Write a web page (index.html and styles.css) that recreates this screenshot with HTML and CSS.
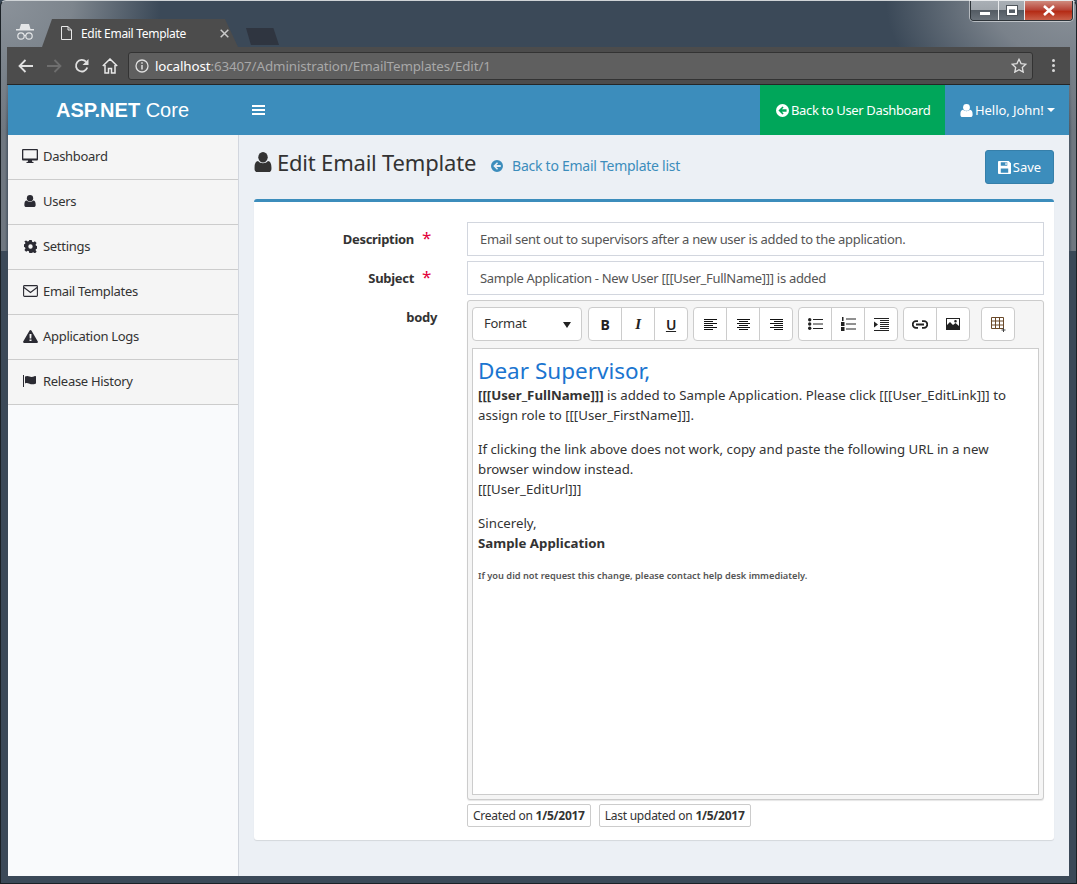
FILE: index.html
```html
<!DOCTYPE html>
<html lang="en">
<head>
<meta charset="utf-8">
<title>Edit Email Template</title>
<link rel="stylesheet" href="styles.css">
</head>
<body>
<svg class="defs" width="0" height="0" aria-hidden="true">
  <defs>
    <symbol id="i-user" viewBox="0 0 16 16"><circle cx="8" cy="4.2" r="4.2"/><path d="M3.6 7.2c1.1 1.1 2.7 1.8 4.4 1.8s3.300-.7 4.400-1.800c2 .3 3.100 2 3.100 5v1.300c0 1.500-1 2.500-2.500 2.500H3c-1.500 0-2.500-1-2.500-2.500v-1.300c0-3 1.100-4.700 3.100-5z"/></symbol>
    <symbol id="i-back" viewBox="0 0 16 16"><path fill-rule="evenodd" d="M8 0a8 8 0 1 0 0 16A8 8 0 0 0 8 0zM3 8l5-5 1.400 1.400-2.200 2.200H13v2.800H7.200l2.200 2.200L8 13z"/></symbol>
  </defs>
</svg>
<div class="window">
  <div class="winbtns">
    <span class="winbtn min"><i></i></span>
    <span class="winbtn max"><i></i></span>
    <span class="winbtn close">
      <svg width="14" height="11" viewBox="0 0 14 11"><path d="M2 1l10 9M12 1L2 10" stroke="#fff" stroke-width="2.600" fill="none"/></svg>
    </span>
  </div>
  <div class="tabstrip">
    <svg class="incognito" width="18" height="17" viewBox="0 0 18 17"><path fill="#e4e6e8" d="M5 0h8l1.500 5H18v1.500H0V5h3.500z"/><g fill="none" stroke="#e4e6e8" stroke-width="1.200"><circle cx="5" cy="12" r="3.200"/><circle cx="13" cy="12" r="3.200"/><path d="M8 11.500h2"/></g></svg>
    <div class="tab">
      <svg class="tabdoc" width="11" height="14" viewBox="0 0 11 14"><path d="M.5.500h6.500l3.500 3.500v9.500H.5zM7 .5V4h3.500" fill="none" stroke="#e8e8e8"/></svg>
      <span class="tabtitle">Edit Email Template</span>
      <svg class="tabx" width="9" height="9" viewBox="0 0 9 9"><path d="M.7.700l7.600 7.600M8.300.700L.7 8.300" stroke="#c9c9c9" stroke-width="1.500"/></svg>
    </div>
    <div class="newtab"></div>
  </div>
  <div class="toolbar">
    <svg class="tb-ic" width="16" height="14" viewBox="0 0 16 14"><path d="M15 7H2M7.500 1L1.500 7l6 6" fill="none" stroke="#e0e0e0" stroke-width="1.800"/></svg>
    <svg class="tb-ic" width="16" height="14" viewBox="0 0 16 14"><path d="M1 7h13M8.500 1l6 6-6 6" fill="none" stroke="#6e6e6e" stroke-width="1.800"/></svg>
    <svg class="tb-ic" width="16" height="16" viewBox="0 0 16 16"><path d="M13.300 9.500A5.800 5.800 0 1 1 12 3.700" fill="none" stroke="#e0e0e0" stroke-width="1.800"/><path d="M14.500 1v6h-6z" fill="#e0e0e0"/></svg>
    <svg class="tb-ic" width="16" height="16" viewBox="0 0 16 16"><path d="M.8 8L8 1l7.200 7M3 7v8h3.500v-4.500h3V15H13V7" fill="none" stroke="#e8e8e8" stroke-width="1.500"/></svg>
    <div class="omnibox">
      <svg width="14" height="14" viewBox="0 0 14 14"><circle cx="7" cy="7" r="6" fill="none" stroke="#e0e0e0" stroke-width="1.300"/><path d="M7 6v4.500M7 3.200v1.600" stroke="#e0e0e0" stroke-width="1.500"/></svg>
      <span class="url"><b>localhost</b>:63407/Administration/EmailTemplates/Edit/1</span>
      <svg class="star" width="16" height="15" viewBox="0 0 16 15"><path d="M8 1.300l2.050 4.300 4.700.6-3.450 3.250.9 4.650L8 11.800l-4.200 2.300.9-4.650L1.250 6.200l4.700-.6z" fill="none" stroke="#e0e0e0" stroke-width="1.300"/></svg>
    </div>
    <div class="kebab"><i></i><i></i><i></i></div>
  </div>
  <div class="app">
    <header class="topbar">
      <a class="logo"><b>ASP.NET</b> Core</a>
      <span class="burger"><i></i><i></i><i></i></span>
      <a class="nav-green"><svg class="ic13" fill="currentColor"><use href="#i-back"/></svg>Back to User Dashboard</a>
      <a class="nav-user"><svg class="ic13" fill="currentColor"><use href="#i-user"/></svg>Hello, John!<span class="caret"></span></a>
    </header>
    <div class="main">
      <nav class="sidebar">
        <a class="side-item"><span class="side-ic"><svg width="16" height="14" viewBox="0 0 16 14" fill="currentColor"><path fill-rule="evenodd" d="M1.300 0h13.400C15.500 0 16 .5 16 1.300v8.900c0 .8-.5 1.300-1.300 1.300H10v1.200l1.500.3v1H4.500v-1l1.500-.3v-1.200H1.300C.5 11.500 0 11 0 10.200V1.300C0 .5.500 0 1.300 0zM1.300 1.200v8.400h13.400V1.200z"/></svg></span>Dashboard</a>
        <a class="side-item"><span class="side-ic"><svg width="12" height="12" fill="currentColor"><use href="#i-user"/></svg></span>Users</a>
        <a class="side-item"><span class="side-ic"><svg width="13" height="13" viewBox="0 0 16 16" fill="currentColor"><path fill-rule="evenodd" d="M6.500 0h3l.5 2.300 1.400.6 2-1.300 2.100 2.100-1.300 2 .6 1.400 2.200.4v3l-2.200.5-.6 1.400 1.300 2-2.100 2.100-2-1.300-1.400.6L9.500 16h-3L6 13.800l-1.400-.6-2 1.300L.5 12.400l1.300-2-.6-1.400L-1 8.500v-3l2.200-.5.600-1.400-1.300-2L2.600 .5l2 1.300L6 1.200zM8 5.300a2.700 2.700 0 1 0 0 5.400 2.700 2.700 0 0 0 0-5.400z"/></svg></span>Settings</a>
        <a class="side-item"><span class="side-ic"><svg width="15" height="12" viewBox="0 0 15 12"><path d="M1.500.6h12c.5 0 .9.400.9.900v9c0 .5-.4.900-.9.900h-12c-.5 0-.9-.4-.9-.9v-9c0-.5.400-.9.900-.9zM1 2.500l6.500 5 6.500-5" fill="none" stroke="currentColor" stroke-width="1.100"/></svg></span>Email Templates</a>
        <a class="side-item"><span class="side-ic"><svg width="15" height="13" viewBox="0 0 15 13" fill="currentColor"><path fill-rule="evenodd" d="M7.500 0c.4 0 .7.200.9.500l6.400 11c.4.700 0 1.500-.9 1.500H1.100c-.9 0-1.300-.8-.9-1.500L6.600.5c.2-.3.5-.5.900-.5zM6.500 4l.2 4.500h1.600L8.500 4zM6.500 9.500V11h2V9.500z"/></svg></span>Application Logs</a>
        <a class="side-item"><span class="side-ic"><svg width="14" height="12" viewBox="0 0 14 12" fill="currentColor"><path d="M0 0h1v12H0z"/><path d="M2 1.500c1.500-.8 3-.8 4.500 0s3 .6 5.500-.5l1 .200v7.300c-2.500 1-4.500 1.200-6.500.3S3.500 7.700 2 8.500z"/></svg></span>Release History</a>
      </nav>
      <main class="content">
        <div class="page-head">
          <h1 class="page-title"><svg width="18" height="20" viewBox="0 0 16 16" preserveAspectRatio="none" fill="currentColor"><use href="#i-user"/></svg>Edit Email Template</h1>
          <a class="back-link"><svg width="12" height="12" fill="currentColor"><use href="#i-back"/></svg>Back to Email Template list</a>
          <button class="btn-save"><svg width="13" height="13" viewBox="0 0 14 14"><path fill="#fff" fill-rule="evenodd" d="M1 0h10.500L14 2.500V13a1 1 0 0 1-1 1H1a1 1 0 0 1-1-1V1a1 1 0 0 1 1-1zM3 1.300V5h7V1.300zM8 1.800h1.300v2.600H8zM3 8v4.700h8V8z"/></svg>Save</button>
        </div>
        <section class="card">
          <div class="form-row">
            <label class="form-label">Description<span class="req">*</span></label>
            <div class="input">Email sent out to supervisors after a new user is added to the application.</div>
          </div>
          <div class="form-row">
            <label class="form-label">Subject<span class="req">*</span></label>
            <div class="input">Sample Application - New User [[[User_FullName]]] is added</div>
          </div>
          <div class="form-row">
            <label class="form-label body-label">body</label>
            <div class="body-col">
              <div class="editor">
                <div class="ed-toolbar">
                  <div class="ed-group ed-first"><span class="ed-format">Format<span class="ed-caret"></span></span></div>
                  <div class="ed-group">
                    <span class="ed-btn ed-b">B</span><span class="ed-btn ed-i">I</span><span class="ed-btn ed-u">U</span>
                  </div>
                  <div class="ed-group">
                    <span class="ed-btn"><svg width="13" height="11" viewBox="0 0 13 11"><path d="M0 .5h13M0 2.500h9M0 4.500h13M0 6.500h9M0 8.500h13M0 10.500h9" stroke="#111"/></svg></span>
                    <span class="ed-btn"><svg width="13" height="11" viewBox="0 0 13 11"><path d="M0 .5h13M2 2.500h9M0 4.500h13M2 6.500h9M0 8.500h13M2 10.500h9" stroke="#111"/></svg></span>
                    <span class="ed-btn"><svg width="13" height="11" viewBox="0 0 13 11"><path d="M0 .5h13M4 2.500h9M0 4.500h13M4 6.500h9M0 8.500h13M4 10.500h9" stroke="#111"/></svg></span>
                  </div>
                  <div class="ed-group">
                    <span class="ed-btn"><svg width="15" height="12" viewBox="0 0 15 12"><g fill="#222"><circle cx="1.700" cy="1.700" r="1.700"/><circle cx="1.700" cy="6" r="1.700"/><circle cx="1.700" cy="10.300" r="1.700"/></g><path d="M5 1.500h10M5 6h10M5 10.500h10" stroke="#222"/></svg></span>
                    <span class="ed-btn"><svg width="15" height="14" viewBox="0 0 15 14"><path d="M5 2h10M5 7h10M5 12h10" stroke="#222"/><g fill="#222"><rect x="1" y="0" width="1.500" height="4"/><rect x="0" y="5" width="3.500" height="4"/><rect x="0" y="10" width="3.500" height="4"/></g></svg></span>
                    <span class="ed-btn"><svg width="15" height="13" viewBox="0 0 15 13"><path d="M0 .5h15M6 2.500h9M6 4.500h9M6 6.500h9M6 8.500h9M6 10.500h9M0 12.500h15" stroke="#222"/><path d="M0 3.500l4 3-4 3z" fill="#222"/></svg></span>
                  </div>
                  <div class="ed-group">
                    <span class="ed-btn"><svg width="16" height="9" viewBox="0 0 16 9"><path d="M6 1.200H4a3.300 3.300 0 0 0 0 6.600h2M10 1.200h2a3.300 3.300 0 0 1 0 6.600h-2M4 4.500h8" fill="none" stroke="#222" stroke-width="1.800"/></svg></span>
                    <span class="ed-btn"><svg width="14" height="12" viewBox="0 0 14 12"><path fill-rule="evenodd" fill="#222" d="M0 0h14v12H0zM1 1v6l3-3 3 3 2.500-2L13 8V1zM9.500 2a1.300 1.300 0 1 1 0 2.600 1.300 1.300 0 0 1 0-2.600z"/></svg></span>
                  </div>
                  <div class="ed-group ed-table">
                    <span class="ed-btn"><svg width="15" height="15" viewBox="0 0 15 15"><path d="M.5.500h12v11H.5zM.5 4h12M.5 8h12M4.500.5v11M8.500.5v11" fill="none" stroke="#6b4a2a"/><path d="M12.500 11v4M10.500 13h4" stroke="#444"/></svg></span>
                  </div>
                </div>
                <div class="ed-body">
                  <h2 class="mail-head">Dear Supervisor,</h2>
                  <p><b>[[[User_FullName]]]</b> is added to Sample Application. Please click [[[User_EditLink]]] to assign role to [[[User_FirstName]]].</p>
                  <p>If clicking the link above does not work, copy and paste the following URL in a new browser window instead.<br>[[[User_EditUrl]]]</p>
                  <p>Sincerely,<br><b>Sample Application</b></p>
                  <p class="mail-small">If you did not request this change, please contact help desk immediately.</p>
                </div>
              </div>
              <div class="badges">
                <span class="badge">Created on <b>1/5/2017</b></span>
                <span class="badge">Last updated on <b>1/5/2017</b></span>
              </div>
            </div>
          </div>
        </section>
      </main>
    </div>
  </div>
</div>
</body>
</html>
```

FILE: styles.css
```css
* { box-sizing: border-box; }
html, body { margin: 0; height: 100%; overflow: hidden; }
body { font-family: "Noto Sans", "Open Sans", sans-serif; font-size: 13px; letter-spacing: -.3px; color: #333; background: #3a4856; }
.defs { position: absolute; }
a { color: inherit; text-decoration: none; }

.window {
  position: relative;
  width: 1077px; height: 884px;
  padding: 0 7px 7px;
  display: flex; flex-direction: column;
  border: 1px solid #1b2126;
  border-top-color: #cfd3d6;
  border-radius: 6px 6px 0 0;
  background:
    radial-gradient(ellipse 160px 130px at 0 0, #8b929a 0%, #7d858d 45%, rgba(60,72,86,0) 100%),
    radial-gradient(ellipse 190px 130px at 100% 0, #8b929a 0%, #79818a 45%, rgba(60,72,86,0) 100%),
    linear-gradient(90deg, #6f7780 0, #6f7780 4px, transparent 8px) 0 0 / 100% 250px no-repeat,
    linear-gradient(270deg, #6f7780 0, #6f7780 4px, transparent 8px) 0 0 / 100% 250px no-repeat,
    #3b4958;
}

.winbtns {
  position: absolute; top: 0; right: 3px;
  display: flex; height: 20px;
  border: 1px solid #2d3338; border-top: 0;
  border-radius: 0 0 4px 4px; overflow: hidden;
  box-shadow: 0 0 0 1px rgba(255,255,255,.5);
}
.winbtn { display: flex; align-items: center; justify-content: center; height: 100%; border-right: 1px solid #e8eaec; background: linear-gradient(#a9afb5, #a0a6ac 45%, #545c64 50%, #6a727a); }
.min { width: 28px; }
.max { width: 26px; }
.close { width: 47px; border-right: 0; background: linear-gradient(#cf8a7e, #b8463a 45%, #b52c16 55%, #c9604a); }
.min i { width: 10px; height: 3px; margin-top: 5px; background: #fff; }
.max i { width: 10px; height: 9px; border: 2px solid #fff; border-top-width: 3px; outline: 1px solid #50565c; }

.tabstrip { height: 46px; display: flex; align-items: flex-end; flex-shrink: 0; }
.incognito { margin: 0 0 6px 8px; }
.tab {
  width: 196px; height: 28px; margin-left: 8px;
  display: flex; align-items: center;
  padding: 0 12px 0 19px;
  background: #4c4c4c;
  clip-path: polygon(0 100%, 10px 0, 183px 0, 100% 100%);
  color: #fff; font-size: 12px;
}
.tabtitle { margin-left: 9px; flex: 1; letter-spacing: -.3px; white-space: nowrap; }
.tabx { margin-right: -3px; }
.newtab { width: 33px; height: 17px; margin: 0 0 2px 8px; background: #2f3540; clip-path: polygon(0 0, 83% 0, 100% 100%, 15% 100%); }

.toolbar {
  height: 38px; flex-shrink: 0;
  margin: 0 -1px;
  padding: 0 6px 0 11px;
  display: flex; align-items: center;
  background: #4c4c4c;
  border-bottom: 1px solid #262626;
  gap: 12px;
}
.tb-ic { flex-shrink: 0; }
.omnibox {
  flex: 1; height: 28px; margin-left: -2px;
  display: flex; align-items: center; gap: 6px;
  padding: 0 5px 0 6px;
  background: #5f5f5f;
  border: 1px solid #333;
  border-radius: 3px;
}
.url { flex: 1; font-size: 13.350px; color: #a8a8a8; letter-spacing: -.1px; white-space: nowrap; }
.url b { color: #fff; font-weight: 400; }
.kebab { width: 22px; margin-left: -3px; display: flex; flex-direction: column; align-items: center; gap: 2px; }
.kebab i { width: 3px; height: 3px; border-radius: 50%; background: #d8d8d8; }

.app { flex: 1; min-height: 0; display: flex; flex-direction: column; background: #ecf0f5; }
.topbar { height: 50px; flex-shrink: 0; display: flex; align-items: center; background: #3c8dbc; color: #fff; }
.logo { width: 230px; padding-left: 48px; font: 20px "Liberation Sans", sans-serif; letter-spacing: 0; }
.burger { width: 13px; margin-left: 14px; display: flex; flex-direction: column; gap: 2px; margin-right: auto; }
.burger i { height: 2px; background: #fff; }
.nav-green, .nav-user { height: 100%; display: flex; align-items: center; font-size: 13px; }
.nav-green { width: 185px; padding-left: 16px; background: #00a65a; letter-spacing: -.36px; }
.nav-user { width: 124px; padding-left: 15px; letter-spacing: -.05px; }
.ic13 { width: 13px; height: 13px; margin-right: 2px; flex-shrink: 0; }
.caret { margin-left: 3px; border: 4.500px solid transparent; border-top-color: #fff; border-bottom: 0; }

.main { flex: 1; min-height: 0; display: flex; }
.sidebar { width: 231px; flex-shrink: 0; background: #f9fafc; border-right: 1px solid #d2d6de; }
.side-item { height: 45px; display: flex; align-items: center; padding: 0 0 2px 14px; background: #f5f5f5; border-bottom: 1px solid #ccc; color: #333; }
.side-ic { width: 21px; display: flex; justify-content: center; padding-right: 5px; color: #2b2b33; }

.content { flex: 1; min-width: 0; padding: 0 15px; }
.page-head { height: 64px; display: flex; align-items: flex-start; }
.page-title { margin: 14px 0 0; display: flex; align-items: center; gap: 5px; font-size: 22px; font-weight: 400; line-height: 26px; letter-spacing: -.2px; color: #333; }
.back-link { margin: 21px auto 0 15px; display: flex; align-items: center; gap: 9px; font-size: 14px; line-height: 20px; letter-spacing: -.26px; color: #3c8dbc; }
.btn-save { margin-top: 15px; width: 69px; height: 34px; display: flex; align-items: center; justify-content: center; gap: 2px; padding: 0; background: #3c8dbc; color: #fff; border: 1px solid #367fa9; border-radius: 3px; font: inherit; }

.card { height: 641px; padding: 20px 10px 0 0; background: #fff; border-top: 3px solid #3c8dbc; border-radius: 3px; box-shadow: 0 1px 1px rgba(0,0,0,.1); }
.form-row { display: grid; grid-template-columns: 213px 1fr; margin-bottom: 5px; }
.form-label { padding: 8px 53px 0 0; text-align: right; font-weight: 700; position: relative; line-height: 18px; }
.body-label { padding-right: 30px; }
.req { position: absolute; right: 36px; top: 7px; color: #e2003a; font-size: 17px; font-weight: 400; }
.input { height: 34px; padding: 0 12px; display: flex; align-items: center; border: 1px solid #d2d6de; color: #555; white-space: nowrap; }

.editor { height: 500px; display: flex; flex-direction: column; padding: 6px 4px 4px; background: #f5f5f5; border: 1px solid #ccc; border-radius: 3px; box-shadow: 0 1px 1px rgba(0,0,0,.1); }
.ed-toolbar { display: flex; gap: 5px; margin-bottom: 7px; flex-shrink: 0; }
.ed-group { display: flex; height: 34px; background: #fff; border: 1px solid #ccc; border-radius: 4px; }
.ed-first { margin-right: 1px; }
.ed-table { margin-left: 6px; }
.ed-format { width: 108px; padding: 0 10px 3px 11px; display: flex; align-items: center; justify-content: space-between; }
.ed-caret { margin: 4px 0 0; border: 4px solid transparent; border-top: 6px solid #222; border-bottom: 0; }
.ed-btn { width: 33px; display: flex; align-items: center; justify-content: center; border-left: 1px solid #ccc; font-size: 14px; color: #222; }
.ed-btn:first-child { width: 32px; border-left: 0; }
.ed-b { font-weight: 700; }
.ed-i { font-style: italic; font-family: "Liberation Serif", serif; font-size: 15px; font-weight: 700; }
.ed-u { text-decoration: underline; font-weight: 600; }

.ed-body { flex: 1; min-height: 0; padding: 8px 5px; background: #fff; border: 1px solid #ccc; font-size: 13.260px; letter-spacing: 0; line-height: 20px; }
.ed-body p { margin: 0 0 14px; }
.mail-head { margin: 0; font-size: 22.500px; line-height: 28px; font-weight: 400; color: #1b75d0; }
.ed-body .mail-small { margin-top: -1px; font-size: 9.250px; font-weight: 600; color: #555; }
.badges { display: flex; gap: 8px; margin-top: 4px; }
.badge { height: 23px; padding: 0 5px; display: flex; align-items: center; gap: 3px; font-size: 12px; letter-spacing: -.25px; border: 1px solid #ccc; border-radius: 2px; }
```
